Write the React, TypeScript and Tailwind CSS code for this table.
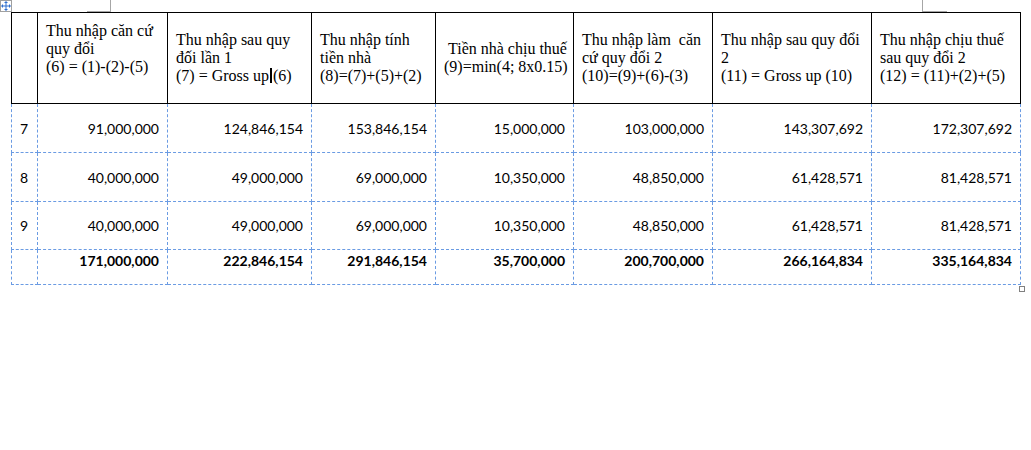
const headers: string[][] = [
  ["Thu nhập căn cứ", "quy đổi", "(6) = (1)-(2)-(5)", "\u00a0"],
  ["Thu nhập sau quy", "đối lần 1", "CURSOR"],
  ["Thu nhập tính", "tiền nhà", "(8)=(7)+(5)+(2)"],
  ["\u00a0Tiền nhà chịu thuế", "(9)=min(4; 8x0.15)"],
  ["Thu nhập làm\u00a0 căn", "cứ quy đổi 2", "(10)=(9)+(6)-(3)"],
  ["Thu nhập sau quy đổi", "2", "(11) = Gross up (10)"],
  ["Thu nhập chịu thuế", "sau quy đổi 2", "(12) = (11)+(2)+(5)"],
]

const rows: { no: string; h: string; values: string[] }[] = [
  {
    no: "7",
    h: "h-[49px]",
    values: ["91,000,000", "124,846,154", "153,846,154", "15,000,000", "103,000,000", "143,307,692", "172,307,692"],
  },
  {
    no: "8",
    h: "h-[49px]",
    values: ["40,000,000", "49,000,000", "69,000,000", "10,350,000", "48,850,000", "61,428,571", "81,428,571"],
  },
  {
    no: "9",
    h: "h-[48px]",
    values: ["40,000,000", "49,000,000", "69,000,000", "10,350,000", "48,850,000", "61,428,571", "81,428,571"],
  },
]

const totals = ["171,000,000", "222,846,154", "291,846,154", "35,700,000", "200,700,000", "266,164,834", "335,164,834"]

const widths = ["w-[26px]", "w-[130px]", "w-[144px]", "w-[124px]", "w-[138px]", "w-[139px]", "w-[159px]", "w-[149px]"]

function MoveHandle() {
  return (
    <div className="absolute left-0 top-0 w-[12px] h-[12px] border border-[#a0a0a0] bg-white flex items-center justify-center">
      <svg width="10" height="10" viewBox="0 0 10 10" fill="#2f6fd0">
        <rect x="4.5" y="1" width="1" height="8" />
        <rect x="1" y="4.5" width="8" height="1" />
        <path d="M5 0 L7 2 L3 2 Z" />
        <path d="M5 10 L7 8 L3 8 Z" />
        <path d="M0 5 L2 3 L2 7 Z" />
        <path d="M10 5 L8 3 L8 7 Z" />
      </svg>
    </div>
  )
}

function HeaderCell({ lines, width }: { lines: string[]; width: string }) {
  return (
    <th className={`${width} border border-black align-middle text-left font-normal px-[8px] text-[16px] leading-[18px] text-black`}>
      {lines.map((line, i) =>
        line === "CURSOR" ? (
          <div key={i} className="whitespace-nowrap">
            (7) = Gross up
            <span className="inline-block w-[2px] h-[15px] bg-black align-[-2px] mx-[1px]" />
            (6)
          </div>
        ) : (
          <div key={i} className="whitespace-nowrap">
            {line}
          </div>
        ),
      )}
    </th>
  )
}

export default function App() {
  return (
    <div className="relative w-[1031px] h-[450px] bg-white overflow-hidden">
      <MoveHandle />
      <div className="absolute left-[87px] top-0 w-[24px] h-[12px] border-r border-b border-[#a6a6a6]" />
      <div className="absolute left-[922px] top-0 w-[25px] h-[12px] border-l border-b border-[#a6a6a6]" />

      <div className="pt-[12px] pl-[11px]">
        <table className="border-collapse table-fixed w-[1010px] font-['Liberation_Serif',serif]">
          <thead>
            <tr className="h-[91px]">
              <th className={`${widths[0]} border border-black`} />
              {headers.map((h, i) => (
                <HeaderCell key={i} lines={h} width={widths[i + 1]} />
              ))}
            </tr>
          </thead>
          <tbody className="font-['Lato',sans-serif] text-[14px] leading-[17px] text-black">
            {rows.map((r) => (
              <tr key={r.no} className={r.h}>
                <td className="border border-dashed border-[#6a9be3] pl-[8px] align-middle">{r.no}</td>
                {r.values.map((v, i) => (
                  <td key={i} className="border border-dashed border-[#6a9be3] pr-[8px] text-right align-middle">
                    {v}
                  </td>
                ))}
              </tr>
            ))}
            <tr className="h-[35px]">
              <td className="border border-dashed border-[#6a9be3]" />
              {totals.map((v, i) => (
                <td key={i} className="border border-dashed border-[#6a9be3] pr-[8px] pt-[2px] text-right align-top font-bold">
                  {v}
                </td>
              ))}
            </tr>
          </tbody>
        </table>
      </div>

      <div className="absolute left-[1019px] top-[286px] w-[6px] h-[6px] border border-[#808080]" />
    </div>
  )
}
